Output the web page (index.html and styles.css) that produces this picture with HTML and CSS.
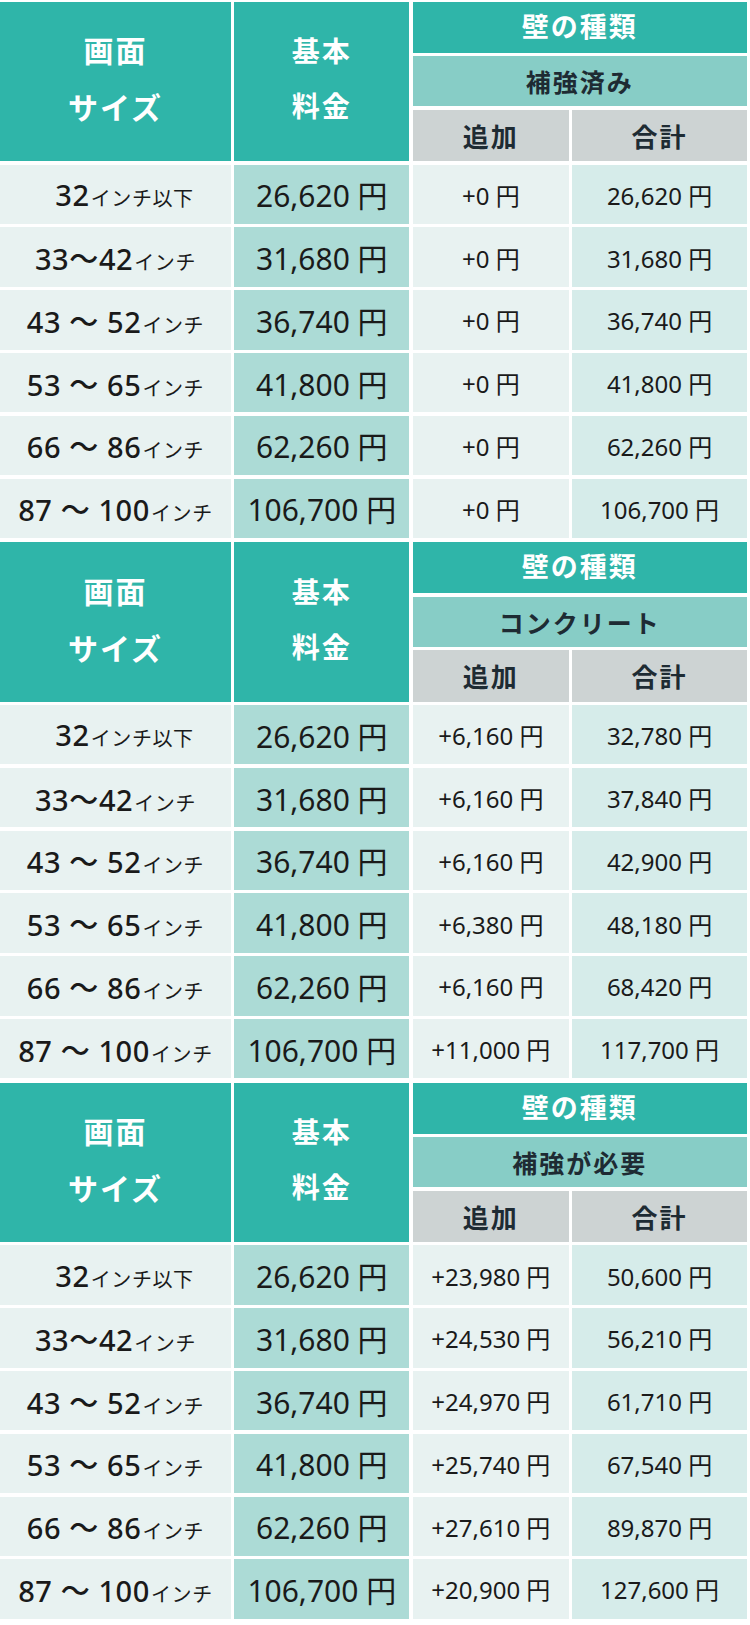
FILE: index.html
```html
<!DOCTYPE html>
<html lang="ja">
<head>
<meta charset="utf-8">
<link rel="stylesheet" href="styles.css">
</head>
<body>
<div class="page">
  <section class="tbl">
    <div class="h h-size"><span>画面</span><span>サイズ</span></div>
    <div class="h h-base"><span>基本</span><span>料金</span></div>
    <div class="h h-wall">壁の種類</div>
    <div class="h-sub">補強済み</div>
    <div class="h-gray">追加</div>
    <div class="h-gray">合計</div>

    <div class="c c1 first"><span><b>32</b><small>インチ以下</small></span></div><div class="c c2">26,620 円</div><div class="c c3">+0 円</div><div class="c c4">26,620 円</div>
    <div class="c c1"><span><b>33〜42</b><small>インチ</small></span></div><div class="c c2">31,680 円</div><div class="c c3">+0 円</div><div class="c c4">31,680 円</div>
    <div class="c c1"><span><b>43 〜 52</b><small>インチ</small></span></div><div class="c c2">36,740 円</div><div class="c c3">+0 円</div><div class="c c4">36,740 円</div>
    <div class="c c1"><span><b>53 〜 65</b><small>インチ</small></span></div><div class="c c2">41,800 円</div><div class="c c3">+0 円</div><div class="c c4">41,800 円</div>
    <div class="c c1"><span><b>66 〜 86</b><small>インチ</small></span></div><div class="c c2">62,260 円</div><div class="c c3">+0 円</div><div class="c c4">62,260 円</div>
    <div class="c c1"><span><b>87 〜 100</b><small>インチ</small></span></div><div class="c c2">106,700 円</div><div class="c c3">+0 円</div><div class="c c4">106,700 円</div>
  </section>

  <section class="tbl">
    <div class="h h-size"><span>画面</span><span>サイズ</span></div>
    <div class="h h-base"><span>基本</span><span>料金</span></div>
    <div class="h h-wall">壁の種類</div>
    <div class="h-sub">コンクリート</div>
    <div class="h-gray">追加</div>
    <div class="h-gray">合計</div>

    <div class="c c1 first"><span><b>32</b><small>インチ以下</small></span></div><div class="c c2">26,620 円</div><div class="c c3">+6,160 円</div><div class="c c4">32,780 円</div>
    <div class="c c1"><span><b>33〜42</b><small>インチ</small></span></div><div class="c c2">31,680 円</div><div class="c c3">+6,160 円</div><div class="c c4">37,840 円</div>
    <div class="c c1"><span><b>43 〜 52</b><small>インチ</small></span></div><div class="c c2">36,740 円</div><div class="c c3">+6,160 円</div><div class="c c4">42,900 円</div>
    <div class="c c1"><span><b>53 〜 65</b><small>インチ</small></span></div><div class="c c2">41,800 円</div><div class="c c3">+6,380 円</div><div class="c c4">48,180 円</div>
    <div class="c c1"><span><b>66 〜 86</b><small>インチ</small></span></div><div class="c c2">62,260 円</div><div class="c c3">+6,160 円</div><div class="c c4">68,420 円</div>
    <div class="c c1"><span><b>87 〜 100</b><small>インチ</small></span></div><div class="c c2">106,700 円</div><div class="c c3">+11,000 円</div><div class="c c4">117,700 円</div>
  </section>

  <section class="tbl">
    <div class="h h-size"><span>画面</span><span>サイズ</span></div>
    <div class="h h-base"><span>基本</span><span>料金</span></div>
    <div class="h h-wall">壁の種類</div>
    <div class="h-sub">補強が必要</div>
    <div class="h-gray">追加</div>
    <div class="h-gray">合計</div>

    <div class="c c1 first"><span><b>32</b><small>インチ以下</small></span></div><div class="c c2">26,620 円</div><div class="c c3">+23,980 円</div><div class="c c4">50,600 円</div>
    <div class="c c1"><span><b>33〜42</b><small>インチ</small></span></div><div class="c c2">31,680 円</div><div class="c c3">+24,530 円</div><div class="c c4">56,210 円</div>
    <div class="c c1"><span><b>43 〜 52</b><small>インチ</small></span></div><div class="c c2">36,740 円</div><div class="c c3">+24,970 円</div><div class="c c4">61,710 円</div>
    <div class="c c1"><span><b>53 〜 65</b><small>インチ</small></span></div><div class="c c2">41,800 円</div><div class="c c3">+25,740 円</div><div class="c c4">67,540 円</div>
    <div class="c c1"><span><b>66 〜 86</b><small>インチ</small></span></div><div class="c c2">62,260 円</div><div class="c c3">+27,610 円</div><div class="c c4">89,870 円</div>
    <div class="c c1"><span><b>87 〜 100</b><small>インチ</small></span></div><div class="c c2">106,700 円</div><div class="c c3">+20,900 円</div><div class="c c4">127,600 円</div>
  </section>
</div>
</body>
</html>
```

FILE: styles.css
```css
html, body {
  margin: 0;
  padding: 0;
  background: #ffffff;
}

body {
  font-family: "Noto Sans CJK JP", "Noto Sans", sans-serif;
  color: #1a1a1a;
}

.page {
  width: 750px;
  padding-top: 2px;
  display: flex;
  flex-direction: column;
  gap: 4.4px;
}

.tbl {
  display: grid;
  grid-template-columns: 231px 175px 156.5px 174.3px;
  grid-template-rows: 51px 50px 51.5px repeat(6, 59.4px);
  gap: 3.4px 3.3px;
}

.h {
  background: #2fb5a9;
  color: #ffffff;
  font-weight: 700;
  display: flex;
  align-items: center;
  justify-content: center;
}

.h-size, .h-base {
  grid-row: 1 / 4;
  flex-direction: column;
  line-height: 44px;
  letter-spacing: 2px;
  padding-bottom: 8px;
}

.h-size {
  grid-column: 1;
  font-size: 30px;
  gap: 13px;
}

.h-base {
  grid-column: 2;
  font-size: 28px;
  gap: 11px;
}

.h-wall {
  grid-column: 3 / 5;
  grid-row: 1;
  font-size: 27px;
  letter-spacing: 2px;
  padding-bottom: 4px;
}

.h-sub {
  grid-column: 3 / 5;
  grid-row: 2;
  background: #87cdc6;
  color: #1e2b33;
  font-weight: 700;
  font-size: 25px;
  letter-spacing: 2px;
  display: flex;
  align-items: center;
  justify-content: center;
}

.h-gray {
  grid-row: 3;
  background: #cdd3d3;
  color: #1e2b33;
  font-weight: 700;
  font-size: 26px;
  letter-spacing: 2px;
  display: flex;
  align-items: center;
  justify-content: center;
}

.c {
  display: flex;
  align-items: center;
  justify-content: center;
  white-space: nowrap;
  font-family: "Noto Sans", "Noto Sans CJK JP", sans-serif;
  font-weight: 400;
}

.c1 {
  background: #e8f2f1;
  letter-spacing: 0.6px;
}

.c1.first {
  padding-left: 18px;
}

.c1 b {
  font-size: 29px;
  font-weight: 500;
}

.c1 small {
  font-family: "Noto Sans CJK JP", sans-serif;
  font-size: 20px;
  margin-left: 1px;
}

.c2 {
  background: #acdbd6;
  font-size: 30px;
  font-weight: 400;
}

.c3 {
  background: #e8f2f1;
  font-size: 24px;
}

.c4 {
  background: #d6ecea;
  font-size: 24px;
}
```
